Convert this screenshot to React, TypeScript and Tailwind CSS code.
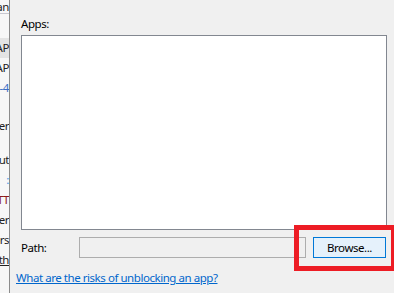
export default function App() {
  const strip = [
    { t: 'an', h: 'h-[13px]', c: 'text-[#222]' },
    { t: '', h: 'h-[25px]', c: '', line: true },
    { t: 'AP', h: 'h-[20px]', c: 'text-[#222] bg-[#e4e4e4]' },
    { t: 'AP', h: 'h-[20px]', c: 'text-[#222]' },
    { t: '4-4', h: 'h-[20px]', c: 'text-[#3a6fc4]' },
    { t: '', h: 'h-[18px]', c: '' },
    { t: 'er', h: 'h-[20px]', c: 'text-[#222]' },
    { t: '', h: 'h-[14px]', c: '' },
    { t: 'ut', h: 'h-[20px]', c: 'text-[#222]' },
    { t: ':', h: 'h-[20px]', c: 'text-[#3a8ee6]' },
    { t: 'TT', h: 'h-[20px]', c: 'text-[#8b1a1a]' },
    { t: 'ler', h: 'h-[20px]', c: 'text-[#222]' },
    { t: 'ors', h: 'h-[20px]', c: 'text-[#222]' },
    { t: 'th', h: 'h-[20px]', c: 'text-[#222] underline' },
  ];

  return (
    <div className="w-[394px] h-[293px] flex overflow-hidden bg-[#f0f0f0] text-[11.5px] leading-[16px] tracking-[-0.45px] font-['Noto_Sans',sans-serif] text-black relative">
      {/* window behind the dialog */}
      <div className="w-[9px] shrink-0 bg-[#f7f7f7] flex flex-col overflow-hidden">
        {strip.map((r, i) => (
          <div
            key={i}
            className={`${r.h} ${r.c} flex items-center justify-end whitespace-nowrap shrink-0 ${r.line ? 'border-t border-[#c8c8d0]' : ''}`}
          >
            {r.t && <span>{r.t}</span>}
          </div>
        ))}
      </div>
      <div className="w-px shrink-0 bg-[#8c8c8c]" />

      {/* dialog */}
      <div className="flex-1 flex flex-col pl-[11px] pr-[7px] pt-[16px]">
        <div className="h-[16px]">Apps:</div>
        <div className="mt-[3px] h-[195px] bg-white border border-[#828790]" />

        <div className="mt-[7px] flex items-center h-[21px]">
          <div className="w-[58px]">Path:</div>
          <div className="w-[227px] h-[21px] border border-[#adadad] bg-[#f0f0f0]" />
          <button className="ml-[7px] w-[73px] h-[21px] border border-[#0078d7] bg-[#e5f1fb] text-[11.5px] leading-[16px] tracking-[-0.45px] text-black">
            Browse...
          </button>
        </div>

        <a className="mt-[12px] -ml-[5px] text-[#0066cc] underline cursor-pointer w-fit">
          What are the risks of unblocking an app?
        </a>
      </div>

      {/* highlight */}
      <div className="absolute left-[294px] top-[225px] w-[102px] h-[46px] border-[5px] border-[#ed1c24]" />
    </div>
  );
}
